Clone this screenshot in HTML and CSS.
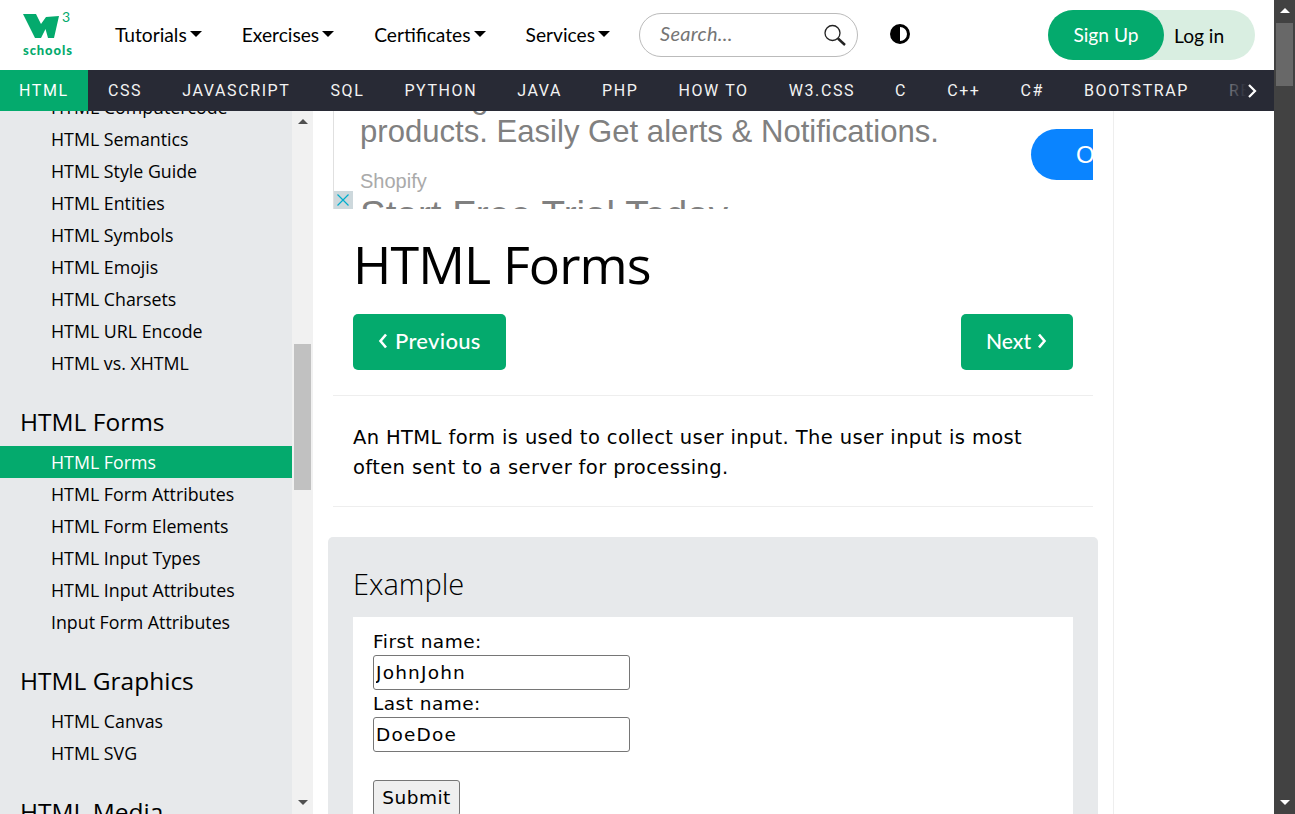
FILE: index.html
```html
<!DOCTYPE html>
<html lang="en">
  <head>
    <meta charset="UTF-8" />
    <meta name="viewport" content="width=device-width, initial-scale=1.0" />
    <title>HTML Forms</title>
    <link rel="stylesheet" href="styles.css">
  </head>
  <body>
    <div class="page">
      <div class="window">
        <header class="topbar">
          <a class="logo" href="#">
            <svg class="logo-mark" viewBox="22 10 50 30" width="50" height="30">
              <path d="M23 14 H36 L41 24 L46 17 L59 16 L54 38 H48 L45.5 29 L41 38 H35 Z" fill="#04aa6d" />
              <text x="62" y="22" class="logo-three">3</text>
            </svg>
            <span class="logo-text">schools</span>
          </a>
          <nav class="menu">
            <a href="#" class="menu-item">Tutorials<i class="caret"></i></a>
            <a href="#" class="menu-item">Exercises<i class="caret"></i></a>
            <a href="#" class="menu-item">Certificates<i class="caret"></i></a>
            <a href="#" class="menu-item">Services<i class="caret"></i></a>
          </nav>
          <div class="search">
            <span class="search-text">Search...</span>
            <svg class="search-icon" viewBox="0 0 22 22" width="22" height="22">
              <circle cx="8.5" cy="9" r="7.5" fill="none" stroke="#222" stroke-width="1.3" />
              <path d="M14 14.5 L21 21" stroke="#222" stroke-width="2.4" />
            </svg>
          </div>
          <svg class="contrast" viewBox="0 0 20 20" width="20" height="20">
            <circle cx="10" cy="10" r="8.5" fill="#fff" stroke="#000" stroke-width="3" />
            <path d="M10 1 A9 9 0 0 0 10 19 Z" fill="#000" />
          </svg>
          <div class="account">
            <a href="#" class="signup">Sign Up</a>
            <a href="#" class="login">Log in</a>
          </div>
        </header>

        <nav class="tabs">
          <a href="#" class="tab active">HTML</a>
          <a href="#" class="tab">CSS</a>
          <a href="#" class="tab">JAVASCRIPT</a>
          <a href="#" class="tab">SQL</a>
          <a href="#" class="tab">PYTHON</a>
          <a href="#" class="tab">JAVA</a>
          <a href="#" class="tab">PHP</a>
          <a href="#" class="tab">HOW TO</a>
          <a href="#" class="tab">W3.CSS</a>
          <a href="#" class="tab">C</a>
          <a href="#" class="tab">C++</a>
          <a href="#" class="tab">C#</a>
          <a href="#" class="tab">BOOTSTRAP</a>
          <a href="#" class="tab">REACT</a>
          <span class="tabs-more">
            <svg viewBox="0 0 10 16" width="10" height="16">
              <path d="M2 2 L8 8 L2 14" fill="none" stroke="#fff" stroke-width="2.2" />
            </svg>
          </span>
        </nav>

        <div class="body-row">
          <aside class="sidebar">
            <div class="sidebar-list">
              <a href="#" class="side-link">HTML Computercode</a>
              <a href="#" class="side-link">HTML Semantics</a>
              <a href="#" class="side-link">HTML Style Guide</a>
              <a href="#" class="side-link">HTML Entities</a>
              <a href="#" class="side-link">HTML Symbols</a>
              <a href="#" class="side-link">HTML Emojis</a>
              <a href="#" class="side-link">HTML Charsets</a>
              <a href="#" class="side-link">HTML URL Encode</a>
              <a href="#" class="side-link">HTML vs. XHTML</a>
              <h2 class="side-title">HTML Forms</h2>
              <a href="#" class="side-link active">HTML Forms</a>
              <a href="#" class="side-link">HTML Form Attributes</a>
              <a href="#" class="side-link">HTML Form Elements</a>
              <a href="#" class="side-link">HTML Input Types</a>
              <a href="#" class="side-link">HTML Input Attributes</a>
              <a href="#" class="side-link">Input Form Attributes</a>
              <h2 class="side-title">HTML Graphics</h2>
              <a href="#" class="side-link">HTML Canvas</a>
              <a href="#" class="side-link">HTML SVG</a>
              <h2 class="side-title">HTML Media</h2>
            </div>
          </aside>
          <div class="side-scroll">
            <i class="arrow-up dark"></i>
            <div class="side-thumb"></div>
            <i class="arrow-down dark"></i>
          </div>

          <main class="main">
            <div class="ad">
              <div class="ad-copy">
                <div class="ad-line ad-hidden">Marketing</div>
                <div class="ad-line">products. Easily Get alerts &amp; Notifications.</div>
                <div class="ad-brand">Shopify</div>
                <div class="ad-cta">Start Free Trial Today</div>
              </div>
              <div class="ad-button"><span>O</span></div>
              <div class="ad-close">
                <svg viewBox="0 0 14 14" width="14" height="14">
                  <path d="M1.5 1.5 L12.5 12.5 M12.5 1.5 L1.5 12.5" stroke="#00aecd" stroke-width="1.2" />
                </svg>
              </div>
            </div>

            <h1 class="title">HTML Forms</h1>
            <div class="pager">
              <a href="#" class="pager-btn pager-prev">
                <svg viewBox="0 0 10 16" width="10" height="16">
                  <path d="M8 1.5 L2.5 8 L8 14.5" fill="none" stroke="#fff" stroke-width="2.6" />
                </svg>
                Previous
              </a>
              <a href="#" class="pager-btn pager-next">
                Next
                <svg viewBox="0 0 10 16" width="10" height="16">
                  <path d="M2 1.5 L7.5 8 L2 14.5" fill="none" stroke="#fff" stroke-width="2.6" />
                </svg>
              </a>
            </div>
            <hr class="rule" />
            <p class="intro">An HTML form is used to collect user input. The user input is most often sent to a server for processing.</p>
            <hr class="rule" />

            <section class="example">
              <h3 class="example-title">Example</h3>
              <form class="example-box">
                <label for="fname">First name:</label>
                <input type="text" id="fname" value="JohnJohn" />
                <label for="lname">Last name:</label>
                <input type="text" id="lname" value="DoeDoe" />
                <button type="button">Submit</button>
              </form>
            </section>
          </main>
        </div>
      </div>

      <div class="page-scroll">
        <i class="arrow-up"></i>
        <div class="page-thumb"></div>
        <i class="arrow-down"></i>
      </div>
    </div>
  </body>
</html>
```

FILE: styles.css
```css
* {
  box-sizing: border-box;
}

html,
body {
  margin: 0;
  padding: 0;
  height: 100%;
  overflow: hidden;
  background-color: #fff;
}

body {
  font-family: "Open Sans", "Noto Sans", sans-serif;
  color: #000;
}

a {
  color: inherit;
  text-decoration: none;
}

.page {
  display: flex;
  height: 814px;
}

.window {
  width: 1274px;
  display: flex;
  flex-direction: column;
}

/* top bar */
.topbar {
  height: 70px;
  flex: none;
  display: flex;
  align-items: center;
  background-color: #fff;
}

.logo {
  width: 115px;
  padding-left: 22px;
  padding-top: 10px;
  display: flex;
  flex-direction: column;
  align-self: flex-start;
}

.logo-mark {
  display: block;
  overflow: visible;
}

.logo-three {
  font-family: "Lato", sans-serif;
  font-size: 14px;
  fill: #04aa6d;
}

.logo-text {
  margin-top: 3px;
  padding-left: 1px;
  font-family: "Lato", sans-serif;
  font-size: 13px;
  font-weight: 900;
  letter-spacing: 0.9px;
  line-height: 14px;
  color: #04aa6d;
}

.menu {
  width: 524px;
  margin-top: -2px;
  display: flex;
  gap: 40px;
}

.menu-item {
  font-family: "Lato", sans-serif;
  font-size: 19.2px;
  color: #000;
  display: flex;
  align-items: center;
}

.caret {
  display: inline-block;
  margin-left: 3px;
  border-left: 6px solid transparent;
  border-right: 6px solid transparent;
  border-top: 6px solid #000;
}

.search {
  width: 219px;
  height: 44px;
  border: 1px solid #bbb;
  border-radius: 22px;
  display: flex;
  align-items: center;
  justify-content: space-between;
  padding: 0 11px 0 20px;
}

.search-text {
  margin-top: -4px;
  font-family: "Lato", sans-serif;
  font-size: 20px;
  font-style: italic;
  letter-spacing: 0.3px;
  color: #757575;
}

.contrast {
  margin-left: 32px;
  margin-top: -2px;
}

.account {
  margin-left: 138px;
  width: 207px;
  height: 50px;
  background-color: #d9eee1;
  border-radius: 25px;
  display: flex;
  align-items: center;
}

.signup {
  width: 116px;
  height: 50px;
  line-height: 50px;
  background-color: #04aa6d;
  color: #fff;
  border-radius: 25px;
  text-align: center;
  font-family: "Lato", sans-serif;
  font-size: 19.2px;
}

.login {
  flex: 1;
  padding-left: 10px;
  font-family: "Lato", sans-serif;
  font-size: 19.2px;
}

/* language tabs */
.tabs {
  height: 41px;
  flex: none;
  background-color: #282a35;
  color: #f3f3f3;
  display: flex;
  overflow: hidden;
  position: relative;
}

.tab {
  flex: none;
  padding: 0 20px;
  line-height: 41px;
  font-family: "Roboto", sans-serif;
  font-size: 16px;
  letter-spacing: 1.6px;
  white-space: nowrap;
}

.tab.active {
  width: 88px;
  padding: 0 0 0 19px;
  background-color: #04aa6d;
  color: #fff;
}

.tabs-more {
  position: absolute;
  top: 0;
  right: 0;
  width: 46px;
  height: 41px;
  display: flex;
  align-items: center;
  justify-content: flex-end;
  padding-right: 17px;
  background: linear-gradient(to right, rgba(40, 42, 53, 0.6), #282a35 40%);
}

/* main row */
.body-row {
  flex: 1;
  min-height: 0;
  display: flex;
}

.sidebar {
  width: 292px;
  flex: none;
  background-color: #e7e9eb;
  overflow: hidden;
}

.sidebar-list {
  margin-top: -20px;
}

.side-link {
  display: block;
  height: 32px;
  line-height: 33px;
  padding-left: 51px;
  font-size: 17.8px;
  color: #000;
  white-space: nowrap;
}

.side-link.active {
  background-color: #04aa6d;
  color: #fff;
}

.side-title {
  margin: 0;
  height: 67px;
  padding: 25px 0 0 20px;
  font-size: 24.5px;
  font-weight: 400;
  line-height: 36px;
}

.side-scroll {
  width: 21px;
  flex: none;
  background-color: #f1f1f1;
  display: flex;
  flex-direction: column;
  align-items: center;
}

.side-thumb {
  width: 17px;
  height: 146px;
  margin-top: 220px;
  background-color: #c1c1c1;
}

.arrow-up,
.arrow-down {
  display: block;
  flex: none;
  border-left: 5px solid transparent;
  border-right: 5px solid transparent;
}

.arrow-up {
  border-bottom: 5px solid #fff;
  margin-top: 8px;
}

.arrow-down {
  border-top: 5px solid #fff;
  margin-top: auto;
  margin-bottom: 9px;
}

.arrow-up.dark {
  border-bottom-color: #505050;
}

.arrow-down.dark {
  border-top-color: #505050;
}

.main {
  width: 801px;
  flex: none;
  padding: 0 20px;
  border-right: 1px solid #eeeeee;
  overflow: hidden;
}

/* ad */
.ad {
  height: 98px;
  position: relative;
  overflow: hidden;
  border-left: 1px solid #e0e0e0;
}

.ad-copy {
  margin-top: -30px;
  padding-left: 26px;
  font-family: "Liberation Sans", Arial, sans-serif;
  color: #808080;
}

.ad-line {
  font-size: 31.1px;
  line-height: 34px;
  white-space: nowrap;
}

.ad-hidden {
  letter-spacing: -1px;
}

.ad-brand {
  margin-top: 20px;
  font-size: 20px;
  line-height: 24px;
  color: #aaaaaa;
}

.ad-cta {
  font-size: 38.6px;
  line-height: 44px;
  white-space: nowrap;
}

.ad-button {
  position: absolute;
  top: 18px;
  right: 0;
  width: 62px;
  height: 51px;
  background-color: #0a84ff;
  border-radius: 26px 0 0 26px;
  overflow: hidden;
  color: #fff;
  font-family: "Liberation Sans", Arial, sans-serif;
  font-size: 24px;
  line-height: 51px;
  padding-left: 45px;
}

.ad-close {
  position: absolute;
  left: -1px;
  bottom: 0;
  width: 20px;
  height: 18px;
  background-color: #cdd8dc;
  display: flex;
  align-items: center;
  justify-content: center;
}

/* article */
.title {
  margin: 25px 0 20px;
  padding-left: 20px;
  font-size: 52px;
  font-weight: 400;
  letter-spacing: -0.9px;
  line-height: 60px;
}

.pager {
  display: flex;
  justify-content: space-between;
  padding: 0 20px;
}

.pager-btn {
  height: 56px;
  padding-bottom: 3px;
  display: flex;
  align-items: center;
  background-color: #04aa6d;
  color: #fff;
  border-radius: 5px;
  font-family: "Lato", sans-serif;
  font-weight: 500;
}

.pager-prev {
  padding-left: 25px;
  padding-right: 25px;
  gap: 7px;
  font-size: 22px;
  letter-spacing: 0.3px;
}

.pager-next {
  padding-left: 25px;
  padding-right: 26px;
  gap: 6px;
  font-size: 21px;
}

.rule {
  margin: 25px 0 0;
  border: 0;
  border-top: 1px solid #eeeeee;
}

.intro {
  margin: 27px 0 23px;
  padding: 0 20px;
  font-family: "DejaVu Sans", Verdana, sans-serif;
  font-size: 19.5px;
  letter-spacing: 0.38px;
  line-height: 30px;
}

.intro + .rule {
  margin-top: 0;
}

.example {
  margin: 30px -5px 0;
  padding: 26px 25px 25px;
  height: 300px;
  background-color: #e7e9eb;
  border-radius: 5px;
}

.example-title {
  margin: 0 0 12px;
  font-size: 29px;
  font-weight: 300;
  line-height: 42px;
}

.example-box {
  height: 220px;
  padding: 10.5px 20px;
  background-color: #fff;
  display: flex;
  flex-direction: column;
  align-items: flex-start;
  font-family: "DejaVu Sans", Verdana, sans-serif;
  font-size: 18.5px;
  letter-spacing: 0.47px;
}

.example-box label {
  line-height: 27.5px;
}

.example-box input {
  width: 257px;
  height: 34.5px;
  padding: 1px 2px;
  border: 1px solid #767676;
  border-radius: 3px;
  font-family: "DejaVu Sans", Verdana, sans-serif;
  font-size: 18.5px;
  letter-spacing: 1.2px;
}

.example-box button {
  margin-top: 28.5px;
  width: 87px;
  height: 36px;
  background-color: #efefef;
  border: 1px solid #767676;
  border-radius: 3px;
  font-family: "DejaVu Sans", Verdana, sans-serif;
  font-size: 18.5px;
  letter-spacing: 0.5px;
  padding: 0 0 2px;
}

/* page scrollbar */
.page-scroll {
  width: 21px;
  flex: none;
  background-color: #424242;
  display: flex;
  flex-direction: column;
  align-items: center;
}

.page-thumb {
  width: 17px;
  height: 63px;
  margin-top: 10px;
  background-color: #686868;
}
```
